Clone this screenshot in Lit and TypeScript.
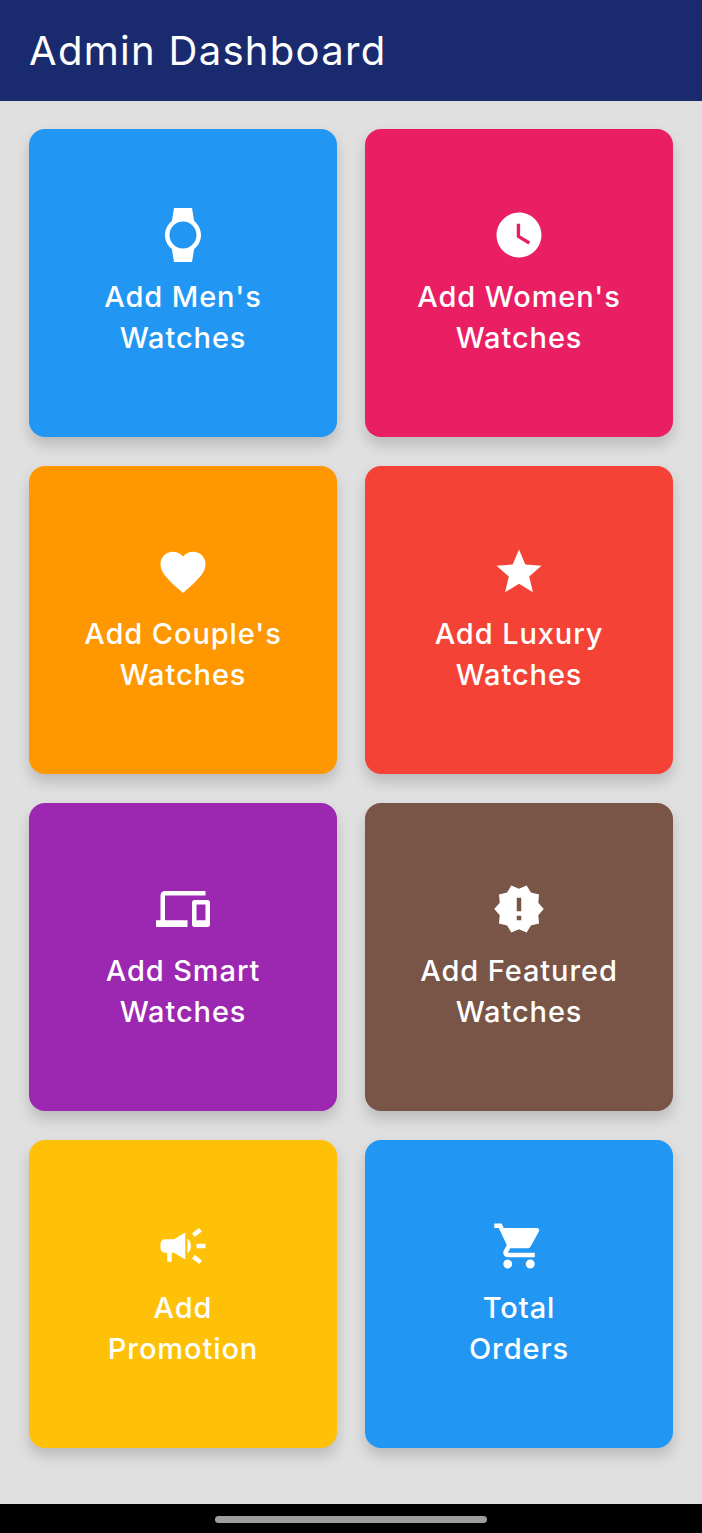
import { LitElement, html, css, svg } from "lit";
import { customElement } from "lit/decorators.js";

const ICONS: Record<string, string> = {
  watch: "M20 12c0-2.54-1.19-4.81-3.04-6.27L16 0H8l-.95 5.73C5.19 7.19 4 9.45 4 12s1.19 4.81 3.05 6.27L8 24h8l.96-5.73C18.81 16.81 20 14.54 20 12zM6 12c0-3.31 2.69-6 6-6s6 2.69 6 6-2.69 6-6 6-6-2.69-6-6z",
  clock: "M12 2C6.5 2 2 6.5 2 12s4.5 10 10 10 10-4.5 10-10S17.5 2 12 2zm4.2 14.2L11 13V7h1.5v5.2l4.5 2.7-.8 1.3z",
  heart: "M12 21.35l-1.45-1.32C5.4 15.36 2 12.28 2 8.5 2 5.42 4.42 3 7.5 3c1.74 0 3.41.81 4.5 2.09C13.09 3.81 14.76 3 16.5 3 19.58 3 22 5.42 22 8.5c0 3.78-3.4 6.86-8.55 11.54L12 21.35z",
  star: "M12 17.27L18.18 21l-1.64-7.03L22 9.24l-7.19-.61L12 2 9.19 8.63 2 9.24l5.46 4.73L5.82 21z",
  devices: "M4 6h18V4H4c-1.1 0-2 .9-2 2v11H0v3h14v-3H4V6zm19 2h-6c-.55 0-1 .45-1 1v10c0 .55.45 1 1 1h6c.55 0 1-.45 1-1V9c0-.55-.45-1-1-1zm-1 9h-4v-7h4v7z",
  badge: "M23 12l-2.44-2.78.34-3.68-3.61-.82-1.89-3.18L12 3 8.6 1.54 6.71 4.72l-3.61.81.34 3.68L1 12l2.44 2.78-.34 3.69 3.61.82 1.89 3.18L12 21l3.4 1.46 1.89-3.18 3.61-.82-.34-3.68L23 12zm-10 5h-2v-2h2v2zm0-4h-2V7h2v6z",
  campaign: "M18 11v2h4v-2h-4zm-2 6.61c.96.71 2.21 1.65 3.2 2.39.4-.53.8-1.07 1.2-1.6-.99-.74-2.24-1.68-3.2-2.4-.4.54-.8 1.08-1.2 1.61zM20.4 5.6c-.4-.53-.8-1.07-1.2-1.6-.99.74-2.24 1.68-3.2 2.4.4.53.8 1.07 1.2 1.6.96-.72 2.21-1.65 3.2-2.4zM4 9c-1.1 0-2 .9-2 2v2c0 1.1.9 2 2 2h1v4h2v-4h1l5 3V6L8 9H4zm11.5 3c0-1.33-.58-2.53-1.5-3.35v6.69c.92-.81 1.5-2.01 1.5-3.34z",
  cart: "M7 18c-1.1 0-1.99.9-1.99 2S5.9 22 7 22s2-.9 2-2-.9-2-2-2zM1 2v2h2l3.6 7.59-1.35 2.45c-.16.28-.25.61-.25.96 0 1.1.9 2 2 2h12v-2H7.42c-.14 0-.25-.11-.25-.25l.03-.12.9-1.63h7.45c.75 0 1.41-.41 1.75-1.03l3.58-6.49c.08-.14.12-.31.12-.48 0-.55-.45-1-1-1H5.21l-.94-2H1zm16 16c-1.1 0-1.99.9-1.99 2s.89 2 1.99 2 2-.9 2-2-.9-2-2-2z",
};

const CARDS = [
  { icon: "watch", top: "Add Men's", bottom: "Watches", color: "#2196f3" },
  { icon: "clock", top: "Add Women's", bottom: "Watches", color: "#e91e63" },
  { icon: "heart", top: "Add Couple's", bottom: "Watches", color: "#ff9800" },
  { icon: "star", top: "Add Luxury", bottom: "Watches", color: "#f44336" },
  { icon: "devices", top: "Add Smart", bottom: "Watches", color: "#9c27b0" },
  { icon: "badge", top: "Add Featured", bottom: "Watches", color: "#795548" },
  { icon: "campaign", top: "Add", bottom: "Promotion", color: "#ffc107" },
  { icon: "cart", top: "Total", bottom: "Orders", color: "#2196f3" },
];

@customElement("app-root")
export class AppRoot extends LitElement {
  static styles = css`
    :host {
      display: flex;
      flex-direction: column;
      height: 1533px;
      background: #e0e0e0;
      font-family: "Inter", "Open Sans", sans-serif;
      color: #fff;
    }
    .bar {
      height: 101px;
      box-sizing: border-box;
      padding: 0 29px;
      background: #1a2a6f;
      display: flex;
      align-items: center;
    }
    .title {
      font-size: 40px;
      font-weight: 400;
      letter-spacing: 1.3px;
      white-space: nowrap;
    }
    .grid {
      flex: 1;
      box-sizing: border-box;
      padding: 28px 29px 0;
      display: grid;
      grid-template-columns: 308px 308px;
      grid-auto-rows: 308px;
      gap: 29px 28px;
    }
    .card {
      border-radius: 16px;
      box-shadow: 0 8px 14px rgba(0, 0, 0, 0.17);
      display: flex;
      flex-direction: column;
      align-items: center;
      justify-content: center;
      text-align: center;
    }
    .icon {
      width: 54px;
      height: 54px;
      fill: #fff;
      display: block;
      margin-bottom: 14px;
    }
    .label {
      font-size: 29px;
      line-height: 41px;
      font-weight: 500;
      letter-spacing: 0.9px;
      white-space: nowrap;
    }
    .label span {
      display: block;
    }
    .nav {
      height: 29px;
      background: #000;
      display: flex;
      justify-content: center;
      align-items: center;
      padding-top: 1px;
      box-sizing: border-box;
    }
    .pill {
      width: 272px;
      height: 7px;
      border-radius: 3.5px;
      background: #9e9e9e;
    }
  `;

  render() {
    return html`
      <header class="bar"><div class="title">Admin Dashboard</div></header>
      <main class="grid">
        ${CARDS.map(
          (c) => html`
            <div class="card" style="background:${c.color}">
              <svg class="icon" viewBox="0 0 24 24">${svg`<path d=${ICONS[c.icon]}></path>`}</svg>
              <div class="label"><span>${c.top}</span><span>${c.bottom}</span></div>
            </div>
          `
        )}
      </main>
      <footer class="nav"><div class="pill"></div></footer>
    `;
  }
}
